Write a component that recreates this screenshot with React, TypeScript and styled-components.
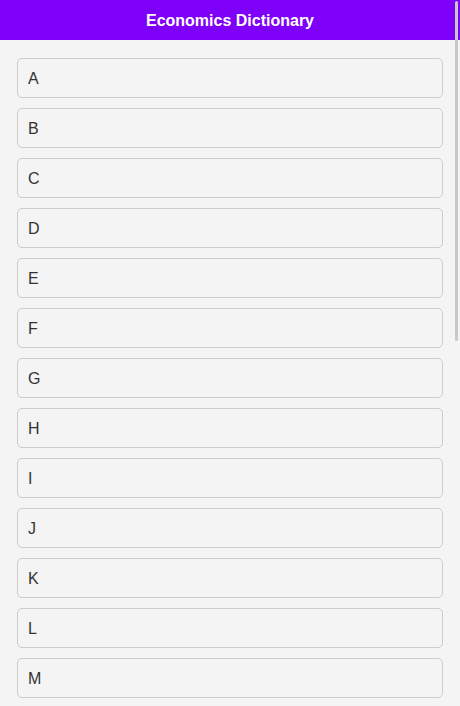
import React from 'react';
import styled, { createGlobalStyle } from 'styled-components';

const letters = 'ABCDEFGHIJKLMNOPQRSTUVWXYZ'.split('');

const GlobalStyle = createGlobalStyle`
  html, body {
    margin: 0;
    padding: 0;
    background: #f4f4f4;
    font-family: "Liberation Sans", Arial, sans-serif;
  }
`

const Header = styled.header`
  height: 40px;
  box-sizing: border-box;
  padding-top: 1px;
  background-color: #7f00f8;
  color: #ffffff;
  display: flex;
  align-items: center;
  justify-content: center;
  font-size: 16px;
  font-weight: 700;
`

const List = styled.ul`
  list-style: none;
  margin: 0;
  padding: 18px 17px 10px 17px;
  display: flex;
  flex-direction: column;
  gap: 10px;
`

const Item = styled.li`
  height: 40px;
  box-sizing: border-box;
  border: 1px solid #cccccc;
  border-radius: 5px;
  background: #f4f4f4;
  display: flex;
  align-items: center;
  padding: 1px 10px 0;
  font-size: 16px;
  color: #333333;
  cursor: pointer;
`

// overlay scrollbar thumb, sits over the page edge
const ScrollThumb = styled.div`
  position: fixed;
  top: 1px;
  right: 2px;
  width: 3px;
  height: 340px;
  border-radius: 2px;
  background: #c8c8c8;
`

export default function App() {
  return (
    <>
      <GlobalStyle />
      <Header>Economics Dictionary</Header>
      <List>
        {letters.map(l => (
          <Item key={l}>{l}</Item>
        ))}
      </List>
      <ScrollThumb />
    </>
  )
}
